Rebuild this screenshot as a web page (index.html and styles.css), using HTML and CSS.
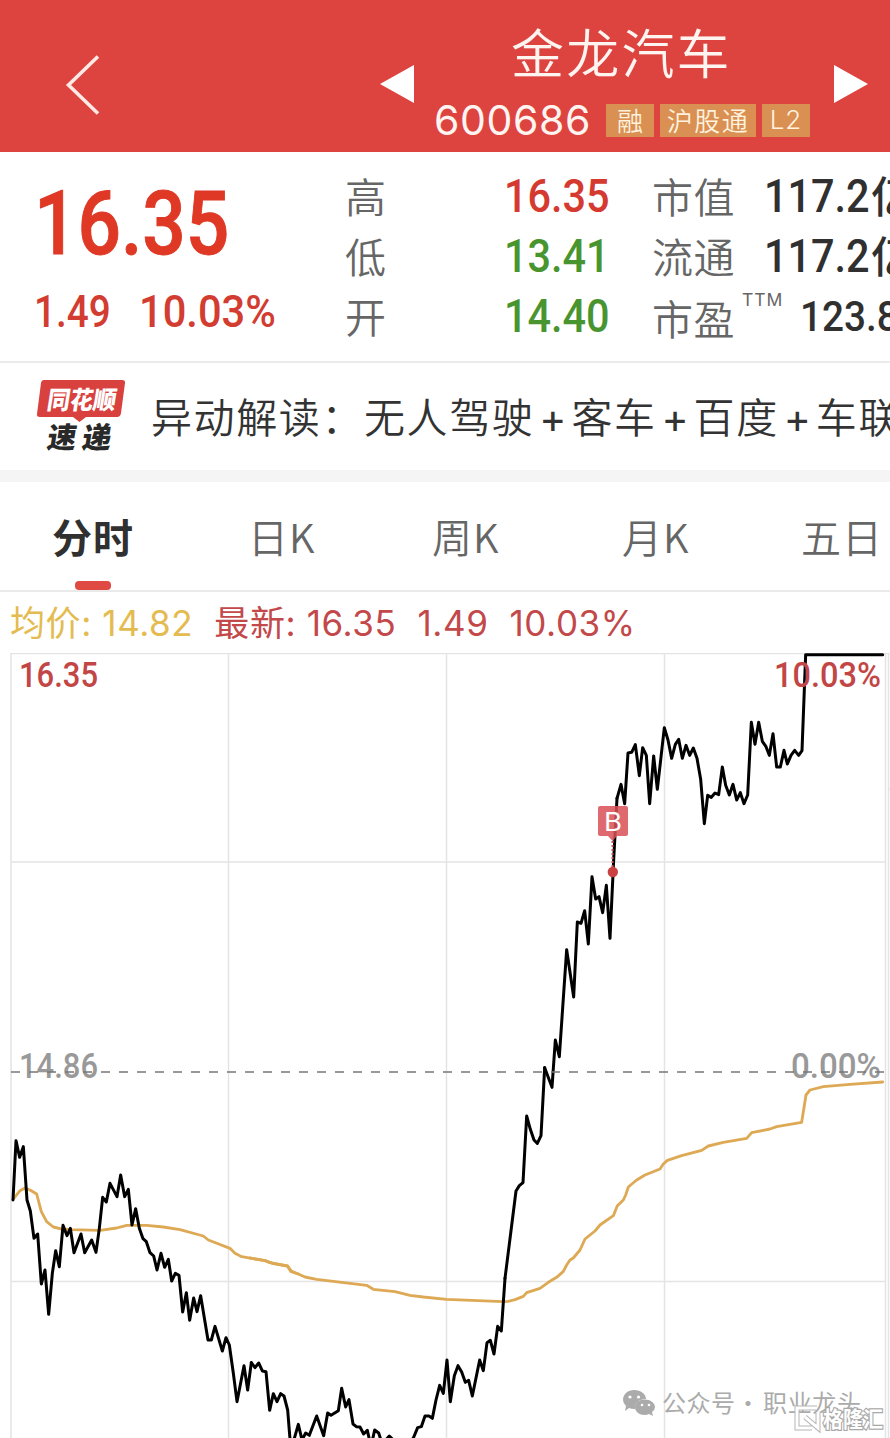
FILE: index.html
```html
<!DOCTYPE html>
<html lang="zh-CN">
<head>
<meta charset="utf-8">
<title>金龙汽车 600686</title>
<link rel="stylesheet" href="styles.css">
</head>
<body>
<header class="header">
  <svg class="back" viewBox="0 0 36 62" width="36" height="62"><path d="M33 2.500L3.500 31L33 59.500"/></svg>
  <svg class="arrow" viewBox="0 0 34 38" width="34" height="38"><path d="M0 19L34 0V38Z"/></svg>
  <div class="stock">
    <h1 class="stock-name">金龙汽车</h1>
    <div class="stock-meta">
      <span class="code">600686</span>
      <span class="tag">融</span>
      <span class="tag tag-wide">沪股通</span>
      <span class="tag tag-latin">L2</span>
    </div>
  </div>
  <svg class="arrow" viewBox="0 0 34 38" width="34" height="38"><path d="M34 19L0 0V38Z"/></svg>
</header>

<section class="quote">
  <div class="price-box">
    <div class="price num">16.35</div>
    <div class="change"><span class="num diff">1.49</span><span class="num percent">10.03%</span></div>
  </div>
  <dl class="stats">
    <dt>高</dt><dd class="num up">16.35</dd>
    <dt>低</dt><dd class="num down">13.41</dd>
    <dt>开</dt><dd class="num down">14.40</dd>
  </dl>
  <dl class="stats stats-cap">
    <dt>市值</dt><dd><span class="num">117.2</span><b class="unit">亿</b></dd>
    <dt>流通</dt><dd><span class="num">117.2</span><b class="unit">亿</b></dd>
    <dt class="pe">市盈<sup>TTM</sup></dt><dd class="pe-value"><span class="num">123.8</span></dd>
  </dl>
</section>

<section class="news">
  <svg class="news-logo" viewBox="0 0 90 76" width="90" height="76">
    <path class="logo-bubble" d="M8 2H86Q89.500 2 89 5L85 35Q84.500 39 81 39H50L43.500 44L37 39H4Q0.500 39 1 36L5 5Q5.500 2 8 2Z"/>
    <text class="logo-top" transform="translate(10 30.500) skewX(-9)" textLength="69" lengthAdjust="spacingAndGlyphs">同花顺</text>
    <text class="logo-bottom" transform="translate(10 70) skewX(-9)"><tspan x="0">速</tspan><tspan x="35">递</tspan></text>
  </svg>
  <p class="news-text">异动解读：无人驾驶<i>+</i>客车<i>+</i>百度<i>+</i>车联网</p>
</section>

<nav class="tabs">
  <a class="tab active">分时</a>
  <a class="tab">日K</a>
  <a class="tab">周K</a>
  <a class="tab">月K</a>
  <a class="tab">五日</a>
</nav>

<div class="legend">
  <span class="avg">均价: <em>14.82</em></span>
  <span class="last">最新: <em>16.35</em></span>
  <em class="last">1.49</em>
  <em class="last">10.03%</em>
</div>

<svg class="chart" viewBox="0 653 890 785" width="890" height="785">
  <path class="grid" d="M11 653.500H890M11 862H885M11 1281.500H885M11 653V1438M228.500 653V1438M446.500 653V1438M664.500 653V1438M885.500 653V1438M888.500 653V1438M888 789H890"/>
  <g class="average">
    <path transform="translate(0 1040) scale(.333333)" d="M39 478L60 452L75 444L90 450L110 462L124 515L140 545L160 561L185 567L215 569L300 571L350 564L380 556L440 556L490 561L540 569L610 588L625 600L690 625L705 640L725 650L795 662L810 668L862 678L875 694L895 702"/>
    <path transform="translate(250 1230) scale(.333333)" d="M0 84L45 92L70 101L113 108L122 124L145 132L165 141L200 148L350 166L370 178L435 185L480 196L520 201L590 208L740 214L760 215"/>
    <path transform="translate(480 1040) scale(.333333)" d="M70 785L84 784L105 779L130 769L140 758L180 745L205 727L230 712L250 694L260 675L270 660L280 654L300 630L315 597L345 573L360 555L400 527L412 497L430 480L437 465L445 441L470 420L495 405L540 387L550 372L562 361L605 347L665 331L685 318L730 307L800 295L815 278L870 267L890 260L965 247L978 165L990 150L1030 140L1110 133L1208 126"/>
  </g>
  <g class="priceline">
    <path transform="translate(0 1040) scale(.333333)" d="M39 480L48 302L59 352L70 320L81 480L91 513L102 595L113 582L124 732L135 690L146 823L157 700L167 632L178 680L189 556L201 587L211 565L222 638L243 582L254 638L275 600L288 637L298 565L308 472L319 486L330 430L351 470L362 405L374 470L385 448L396 555L407 506L418 565L429 596L439 605L450 638L461 648L471 690L483 640L494 682L505 658L515 723L526 700L537 706L548 816L559 758L569 841L581 774L591 815L602 767L624 900L634 900L645 859L667 933L678 893L688 915L700 1000L711 1085L732 977L743 1050L754 968"/>
    <path transform="translate(250 1230) scale(.333333)" d="M4 398L15 413L26 399L37 423L48 425L59 541L70 491L81 515L92 491L102 498L113 540L121 640L133 625L145 583L156 630L167 609L178 616L200 558L221 617L233 549L243 556L265 542L275 475L287 531L297 509L309 582L319 590L330 591L341 612L352 601L363 650L374 600L386 609L396 640L407 630L418 618L430 630L445 650L470 650L490 624L503 593L514 590L525 558L537 558L547 565L558 510L569 466L580 490L591 390L601 515L613 437L624 407L635 426L646 457L656 451L667 498L689 390L700 422L711 338L721 331L732 372L743 289L754 303L765 145"/>
    <path transform="translate(480 1040) scale(.333333)" d="M75 715L108 453L118 437L129 428L140 228L151 268L162 300L172 310L183 287L194 83"/>
    <path transform="translate(480 860) scale(.333333)" d="M194 623L216 682L226 540L238 590L260 269L281 411L292 186L303 190L314 152L325 252L336 50L347 117L357 110L368 158L379 76L390 235L401 0L411 -185"/>
    <path transform="translate(580 690) scale(.333333)" d="M111 325L123 283L134 341L144 189L155 187L166 164L178 257L188 173L199 196L209 341L221 198L232 298L253 113L264 150L275 205L286 163L296 148L307 205L318 166L329 196L340 174L351 205L362 268L373 401L383 316L394 322L405 309L416 314L427 231L437 286L448 315L459 283L470 330L481 308L492 341L503 315L514 97L525 163L536 97L547 154L558 170L568 196L579 131L590 231L601 231L612 181L622 222L633 196L644 181L656 196L666 182L677 -106H908"/>
  </g>
  <g class="marker">
    <path class="marker-stem" d="M612.500 841V868"/>
    <circle cx="612.800" cy="872" r="5.200"/>
    <path class="marker-flag" d="M600 806H626Q628 806 628 808V834Q628 836 626 836H617L612.500 841L608 836H600Q598 836 598 834V808Q598 806 600 806Z"/>
    <text x="604" y="830.500" textLength="18" lengthAdjust="spacingAndGlyphs">B</text>
  </g>
  <g class="axis">
    <text class="axis-up" x="19" y="687" textLength="79" lengthAdjust="spacingAndGlyphs">16.35</text>
    <text class="axis-up" x="774" y="687" textLength="107" lengthAdjust="spacingAndGlyphs">10.03%</text>
    <text class="axis-zero" x="19" y="1078" textLength="79" lengthAdjust="spacingAndGlyphs">14.86</text>
    <text class="axis-zero" x="791" y="1078" textLength="90" lengthAdjust="spacingAndGlyphs">0.00%</text>
  </g>
  <path class="zero" d="M11 1072H884"/>
  <g class="watermark">
    <path d="M634 1390C641 1390 646 1394 646 1399C639 1399 635 1403 635 1408L635 1409Q631 1409 629 1408L625 1411L626 1406Q623 1403 623 1400C623 1394 628 1390 634 1390Z"/>
    <path d="M645 1399.500C650 1399.500 655 1403 655 1407Q655 1410 652 1412L653 1416L649 1414Q647 1415 645 1415C639 1415 635 1411.500 635 1407C635 1403 639 1399.500 645 1399.500Z"/>
    <g class="eyes"><circle cx="630" cy="1397" r="1.600"/><circle cx="638.500" cy="1397" r="1.600"/><circle cx="642" cy="1405" r="1.300"/><circle cx="649" cy="1405" r="1.300"/></g>
    <text x="662" y="1412" textLength="73">公众号</text><text x="736" y="1412">·</text><text x="763" y="1412" textLength="98">职业龙头</text>
  </g>
  <g class="brand">
    <path class="brand-edge" d="M817 1408H797V1428H812M805 1417L818 1428V1412"/>
    <path class="brand-core" d="M817 1408H797V1428H812M805 1417L818 1428V1412"/>
    <text x="823" y="1427" textLength="60" lengthAdjust="spacingAndGlyphs">格隆汇</text>
  </g>
</svg>
</body>
</html>
```

FILE: styles.css
```css
* { box-sizing: border-box; margin: 0; padding: 0; }
body {
  width: 890px;
  height: 1438px;
  overflow: hidden;
  background: #fff;
  color: #333;
  font-family: Inter, "Noto Sans CJK SC", sans-serif;
}
svg { display: block; flex: none; }
em, i { font-style: normal; }

.header {
  display: grid;
  grid-template-columns: 380px 34px 420px 34px;
  height: 152px;
  background: #dd4440;
  color: #fff4f0;
}
.back { margin: 54px 0 0 65px; fill: none; stroke: #ffe9e4; stroke-width: 3.6; }
.arrow { margin-top: 65px; fill: #fff; }
.stock-name {
  height: 98px;
  padding: 13px 0 0 97px;
  font: 350 53px/76px "Noto Sans CJK SC", sans-serif;
  letter-spacing: 2.2px;
}
.stock-meta { display: flex; gap: 6px; padding: 6px 0 0 20px; }
.code { width: 166px; font-size: 41px; line-height: 32px; font-weight: 400; letter-spacing: .6px; }
.tag {
  width: 48px;
  height: 33px;
  background: #d99052;
  color: #fff2df;
  text-align: center;
  font: 350 26px/31px "Noto Sans CJK SC", sans-serif;
}
.tag-wide { width: 96px; letter-spacing: 1.5px; }
.tag-latin { font-family: Inter, sans-serif; letter-spacing: 1px; }

.num {
  display: inline-block;
  font-family: Roboto, sans-serif;
  font-weight: 500;
  transform: scaleX(.9);
  transform-origin: left center;
  white-space: nowrap;
}
.quote {
  display: grid;
  grid-template-columns: 345px 307px 238px;
  height: 211px;
  border-bottom: 2px solid #ebebeb;
}
.price-box { padding: 20px 0 0 34px; color: #df3825; }
.price { display: block; font-size: 89px; line-height: 104px; height: 112px; transform: scaleX(.86); -webkit-text-stroke: 1px; }
.change { display: flex; font-size: 45px; line-height: 55px; color: #d23c31; }
.diff { width: 105px; transform: scaleX(.86); }
.percent { transform: scaleX(.925); }
.stats {
  display: grid;
  grid-template-columns: 159px 148px;
  grid-auto-rows: 60px;
  padding-top: 14px;
  font-size: 46px;
  line-height: 60px;
}
.stats dt {
  color: #666;
  font: 350 41px/58px "Noto Sans CJK SC", sans-serif;
  letter-spacing: .5px;
}
.up { color: #d53a30; }
.down { color: #48952f; }
.stats-cap { grid-template-columns: 112px 140px; overflow: hidden; color: #303030; }
.stats-cap dd { display: flex; }
.stats-cap .num { width: 107px; flex: none; }
.unit { font: 500 43px/56px "Noto Sans CJK SC", sans-serif; }
.stats .pe { position: relative; line-height: 62px; }
.pe sup {
  position: absolute;
  left: 90px;
  top: -4px;
  font: 400 17.5px/36px Inter, sans-serif;
  letter-spacing: 1px;
}
.pe-value { padding-left: 36px; font-size: 43px; }

.news {
  display: flex;
  height: 119px;
  border-bottom: 12px solid #f5f5f5;
  overflow: hidden;
}
.news-logo { margin: 15px 0 0 36px; }
.logo-bubble { fill: #d8413e; }
.logo-top { fill: #fff; font: 900 25px "Noto Sans CJK SC", sans-serif; }
.logo-bottom { fill: #292929; font: 900 29px "Noto Sans CJK SC", sans-serif; }
.news-text {
  margin-left: 25px;
  white-space: nowrap;
  font: 350 41px/104px "Noto Sans CJK SC", sans-serif;
  letter-spacing: 1.6px;
}
.news-text i { display: inline-block; width: 37px; text-align: center; font-family: Inter, sans-serif; letter-spacing: 0; font-weight: 400; }

.tabs {
  display: grid;
  grid-template-columns: 196px 184px 190px 179px 89px;
  height: 110px;
  padding-left: 52px;
  border-bottom: 2px solid #eaeaea;
  font: 350 40px/108px "Noto Sans CJK SC", sans-serif;
}
.tab { color: #666; white-space: nowrap; letter-spacing: 1px; }
.active { color: #303030; font-weight: 700; }
.active::after {
  content: "";
  display: block;
  width: 36px;
  height: 9px;
  margin: -9px 0 0 23px;
  border-radius: 4px;
  background: #df4b42;
}
.legend {
  display: flex;
  gap: 21px;
  height: 61px;
  padding-left: 10px;
  font: 400 35px/62px Inter, "Noto Sans CJK SC", sans-serif;
  letter-spacing: .6px;
  white-space: nowrap;
}
.avg { color: #e4bb50; }
.last { color: #c2484a; }

.grid { fill: none; stroke: #e4e4e4; stroke-width: 1.5; }
.zero { fill: none; stroke: #777; stroke-width: 1.6; stroke-dasharray: 9 9; }
.average { fill: none; stroke: #dda955; stroke-width: 8.5; stroke-linejoin: round; stroke-linecap: round; }
.priceline { fill: none; stroke: #000; stroke-width: 9; stroke-linejoin: round; stroke-linecap: round; }
.marker { fill: #ca4141; }
.marker-flag { fill: #d95257; opacity: .86; }
.marker-stem { stroke: #c95055; stroke-width: 2; stroke-dasharray: 2 2; }
.marker text { fill: #fff; font: 400 26px Inter, sans-serif; }
.axis { font: 500 35px Roboto, sans-serif; }
.axis-up { fill: #c24645; }
.axis-zero { fill: #999; }
.watermark { fill: #ababab; font: 400 24px "Noto Sans CJK SC", sans-serif; }
.eyes { fill: #fff; }
.brand-edge { fill: none; stroke: #b5b5b5; stroke-width: 5; }
.brand-core { fill: none; stroke: #fff; stroke-width: 3; }
.brand text {
  fill: #fff;
  stroke: #a8a8a8;
  stroke-width: 2.4;
  paint-order: stroke;
  font: 700 22px "Noto Sans CJK SC", sans-serif;
}
```
